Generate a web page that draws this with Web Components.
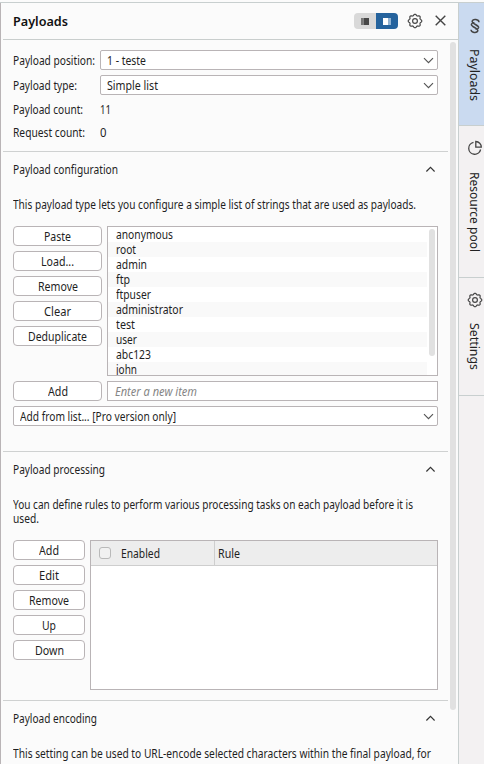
<!DOCTYPE html>
<html lang="en">
<head>
<meta charset="utf-8">
<title>Payloads</title>
<style>
html, body { margin: 0; height: 100%; overflow: hidden; background: #fbfbfb; }
</style>
</head>
<body>
<payload-app></payload-app>
<script>
const define = (name, html, setup) => {
  const tpl = document.createElement('template');
  tpl.innerHTML = html;
  customElements.define(name, class extends HTMLElement {
    connectedCallback() {
      if (this.shadowRoot) return;
      this.attachShadow({ mode: 'open' }).append(tpl.content.cloneNode(true));
      if (setup) setup(this, this.shadowRoot);
    }
  });
};

/* One line of text, condensed so that it fills the length w. */
define('fit-text', `<style>:host{display:block;white-space:nowrap;flex:none}span{display:block;width:max-content;height:max-content;transform-origin:0 0}</style><span><slot></slot></span>`, (host, root) => {
  const w = parseFloat(host.getAttribute('w'));
  const span = root.querySelector('span');
  const vertical = getComputedStyle(host).writingMode !== 'horizontal-tb';
  const box = span.getBoundingClientRect();
  if (vertical) {
    span.style.transform = `scaleY(${w / box.height})`;
    host.style.height = w + 'px';
  } else {
    span.style.transform = `scaleX(${w / box.width})`;
    host.style.width = w + 'px';
  }
});

define('chevron-icon', `<style>:host{display:block;width:11px;height:11px;color:#555}:host([up]){transform:rotate(180deg)}svg{display:block}</style>
<svg width="11" height="11" viewBox="0 0 11 11" fill="none" stroke="currentColor" stroke-width="1.15"><path d="M1 3.2 5.5 7.7 10 3.2"/></svg>`,
(host, root) => { if (host.hasAttribute('up')) root.querySelector('path').setAttribute('d', 'M1.4 3.5 5.5 7.7 9.6 3.5'); });

define('gear-icon', `<style>:host{display:block;width:16px;height:16px;color:#484848}svg{display:block}</style>
<svg width="16" height="16" viewBox="0 0 16 16" fill="none" stroke="currentColor" stroke-width="1.2" stroke-linejoin="round"><path/><circle cx="8" cy="8" r="2.4"/></svg>`, (host, root) => {
  const pts = [];
  for (let i = 0; i < 96; i++) {
    const a = i / 96 * 2 * Math.PI, r = 6.15 + 0.6 * Math.tanh(2 * Math.cos(8 * a));
    pts.push((8 + r * Math.cos(a)).toFixed(2) + ' ' + (8 + r * Math.sin(a)).toFixed(2));
  }
  root.querySelector('path').setAttribute('d', 'M' + pts.join('L') + 'Z');
});

define('push-button', `<style>:host{display:flex;box-sizing:border-box;height:20px;border:1px solid #b9b4b6;border-radius:4px;background:#fff;align-items:center;justify-content:center;padding-top:1px}</style><slot></slot>`);

define('select-box', `<style>:host{display:flex;box-sizing:border-box;height:20px;border:1px solid #b9b4b6;border-radius:2px;background:#fff;align-items:center;justify-content:space-between;padding:0 3px 0 6px}div{padding-top:1px}</style><div><slot></slot></div><chevron-icon></chevron-icon>`);

define('view-toggle', `<style>:host{display:flex;width:44px;height:16px;border-radius:4px;overflow:hidden}div{flex:1;display:flex;align-items:center;justify-content:center;background:#d9d9d9}.on{background:#25639d}svg{display:block}</style>
<div><svg width="8" height="7"><path fill="#777" d="M0 0h2v7H0z"/><path fill="#484848" d="M2 0h6v7H2z"/><path fill="#aaa" d="M2 0h.6v7H2z"/></svg></div>
<div class="on"><svg width="8" height="7"><path fill="#fff" d="M0 0h5.5v7H0z"/><path fill="#93b5d4" d="M6 0h2v7H6z"/></svg></div>`);

define('panel-header', `<style>:host{display:flex;box-sizing:border-box;height:37px;margin-left:2px;padding:0 12px 0 10px;border-bottom:1px solid #c9cecd;align-items:center;font-size:13px;font-weight:600;color:#111}
view-toggle{margin-left:auto}gear-icon{margin:-1px 12px 0 9px}.x{display:block;margin-top:-1px}</style>
<slot></slot><view-toggle></view-toggle><gear-icon></gear-icon>
<svg class="x" width="11" height="11" viewBox="0 0 11 11" stroke="#444" stroke-width="1.4"><path d="M.7.7 10.3 10.3M10.3.7.7 10.3"/></svg>`);

define('pane-section', `<style>:host{display:block;box-sizing:border-box;border-top:1px solid #cfd1d1;padding:0 10px}
header{display:flex;height:35px;align-items:center;justify-content:space-between}chevron-icon{margin-right:2px;color:#333}</style>
<header><slot name="heading"></slot><chevron-icon up></chevron-icon></header><slot></slot>`);

define('field-row', `<style>:host{display:grid;grid-template-columns:87px 1fr;align-items:center}</style><slot name="label"></slot><slot></slot>`);

define('scroll-thumb', `<style>:host{display:block;width:6px;border-radius:3px;background:#e1e1e1}</style>`);

define('string-list', `<style>:host{display:flex;box-sizing:border-box;height:150px;border:1px solid #b9b4b6;background:#fff;overflow:hidden;justify-content:space-between}
.rows{width:319px}.rows div{height:15px;line-height:15px;padding-left:8px;white-space:nowrap}.rows div:nth-child(even){background:#f9f9f9}scroll-thumb{height:127px;margin:2px 2px 0 0}</style>
<div class="rows"></div><scroll-thumb></scroll-thumb>`, (host, root) => {
  const items = [['anonymous',57],['root',20],['admin',31],['ftp',14],['ftpuser',35],['administrator',67],['test',19],['user',21],['abc123',35],['john',21]];
  root.querySelector('.rows').innerHTML = items.map(([t, w]) => `<div><fit-text w="${w}">${t}</fit-text></div>`).join('');
});

define('text-entry', `<style>:host{display:flex;box-sizing:border-box;height:20px;border:1px solid #b9b4b6;background:#fff;align-items:center;padding:1px 0 0 7px;color:#858585;font-style:italic}</style><slot></slot>`);

define('rule-table', `<style>:host{display:block;box-sizing:border-box;height:150px;border:1px solid #b9b4b6;background:#fff}
.head{display:flex;box-sizing:border-box;height:25px;background:#ededed;border-bottom:1px solid #cecece;align-items:center}
.a{display:flex;box-sizing:border-box;width:124px;height:24px;border-right:1px solid #cecece;align-items:center;padding-left:8px;gap:10px}
i{box-sizing:border-box;width:12px;height:12px;border:1px solid #b9b9b9;border-radius:3px;background:#f1f1f1}.b{padding-left:3px}</style>
<div class="head"><div class="a"><i></i><fit-text w="39">Enabled</fit-text></div><div class="b"><fit-text w="22">Rule</fit-text></div></div>`);

define('side-tab', `<style>:host{display:flex;box-sizing:border-box;flex-direction:column;border-bottom:1px solid #c8cfcf;padding-left:8px;font-size:13px;color:#222}
:host([active]){background:#cadaf0}.icon{display:block;width:16px;height:16px}.t{writing-mode:vertical-rl;line-height:16px;width:16px}</style>
<span class="icon"><slot name="icon"></slot></span><div class="t"><slot></slot></div>`);

define('payload-app', `<style>
:host{display:flex;box-sizing:border-box;width:484px;height:762px;border-top:1px solid #c8cfcf;margin-top:2px;overflow:hidden;background:#fbfbfb;color:#1f1f1f;font:12px/15px "Noto Sans","Open Sans",sans-serif}
.panel{box-sizing:border-box;width:459px;border-left:1px solid #b9b4b6;border-right:1px solid #c8cfcf;flex:none}
.scroll{display:flex}.content{width:445px;margin-left:2px;flex:none}
.fields{padding:10px 10px 0;height:111px;box-sizing:border-box}
.fields field-row{height:20px;margin-bottom:5px}.fields .plain{height:19px;margin-bottom:4px}
.conf{height:300px}.proc{height:249px}
.desc{display:flex;flex-direction:column;height:39px;padding-top:10px;box-sizing:border-box;line-height:14px}
.desc fit-text{position:relative;top:1px}
.proc .desc{height:53px}
.cols{display:grid;grid-template-columns:89px 1fr;gap:5px}
.proc .cols{grid-template-columns:72px 1fr}
.stack{display:flex;flex-direction:column;gap:5px}
.full{margin-top:5px}
.side{width:25px;background:#f3f1f2;flex:none}
scroll-thumb.main{height:668px;margin:2px 0 0 2px}
</style>
<div class="panel">
 <panel-header><fit-text w="55">Payloads</fit-text></panel-header>
 <div class="scroll"><div class="content">
  <div class="fields">
   <field-row><fit-text slot="label" w="82">Payload position:</fit-text><select-box><fit-text w="39">1 - teste</fit-text></select-box></field-row>
   <field-row><fit-text slot="label" w="64">Payload type:</fit-text><select-box><fit-text w="51">Simple list</fit-text></select-box></field-row>
   <field-row class="plain"><fit-text slot="label" w="70">Payload count:</fit-text><fit-text w="11">11</fit-text></field-row>
   <field-row class="plain"><fit-text slot="label" w="72">Request count:</fit-text><fit-text w="6.5">0</fit-text></field-row>
  </div>
  <pane-section class="conf"><fit-text slot="heading" w="105">Payload configuration</fit-text>
   <div class="desc"><fit-text w="403">This payload type lets you configure a simple list of strings that are used as payloads.</fit-text></div>
   <div class="cols">
    <div class="stack"><push-button><fit-text w="27">Paste</fit-text></push-button><push-button><fit-text w="33">Load...</fit-text></push-button><push-button><fit-text w="40">Remove</fit-text></push-button><push-button><fit-text w="27">Clear</fit-text></push-button><push-button><fit-text w="59">Deduplicate</fit-text></push-button></div>
    <string-list></string-list>
    <push-button><fit-text w="20">Add</fit-text></push-button>
    <text-entry><fit-text w="82">Enter a new item</fit-text></text-entry>
   </div>
   <select-box class="full"><fit-text w="156">Add from list... [Pro version only]</fit-text></select-box>
  </pane-section>
  <pane-section class="proc"><fit-text slot="heading" w="92">Payload processing</fit-text>
   <div class="desc"><fit-text w="400">You can define rules to perform various processing tasks on each payload before it is</fit-text><fit-text w="26">used.</fit-text></div>
   <div class="cols">
    <div class="stack"><push-button><fit-text w="20">Add</fit-text></push-button><push-button><fit-text w="20">Edit</fit-text></push-button><push-button><fit-text w="40">Remove</fit-text></push-button><push-button><fit-text w="14">Up</fit-text></push-button><push-button><fit-text w="29">Down</fit-text></push-button></div>
    <rule-table></rule-table>
   </div>
  </pane-section>
  <pane-section><fit-text slot="heading" w="84">Payload encoding</fit-text>
   <div class="desc"><fit-text w="418">This setting can be used to URL-encode selected characters within the final payload, for</fit-text></div>
  </pane-section>
 </div><scroll-thumb class="main"></scroll-thumb></div>
</div>
<div class="side">
 <side-tab active style="height:123px;padding-top:15px"><svg slot="icon" width="16" height="16" viewBox="0 0 16 16" fill="none" stroke="#444" stroke-width="1.5"><path d="M12 4.2C11.8 1.2 6.2.6 5.2 3.1 4.4 5.7 12.1 7.2 11.6 9.7 11.3 11 9.7 11.2 8.5 10.9M4 11.8C4.2 14.8 9.8 15.4 10.8 12.9 11.6 10.3 3.9 8.8 4.4 6.3 4.7 5 6.3 4.8 7.5 5.1"/></svg><fit-text w="52" style="margin-top:15px">Payloads</fit-text></side-tab>
 <side-tab style="height:152px;padding-top:14px"><svg slot="icon" width="16" height="16" viewBox="0 0 16 16" fill="none" stroke="#444" stroke-width="1.3"><path d="M6.5 2.4A6 6 0 1 0 13.6 9.5M8.8 1.5V7.2H14.3A5.6 5.6 0 0 0 8.8 1.5Z"/></svg><fit-text w="80" style="margin-top:16px">Resource pool</fit-text></side-tab>
 <side-tab style="height:118px;padding-top:14px"><gear-icon slot="icon"></gear-icon><fit-text w="47" style="margin-top:15px">Settings</fit-text></side-tab>
</div>`);
</script>
</body>
</html>
